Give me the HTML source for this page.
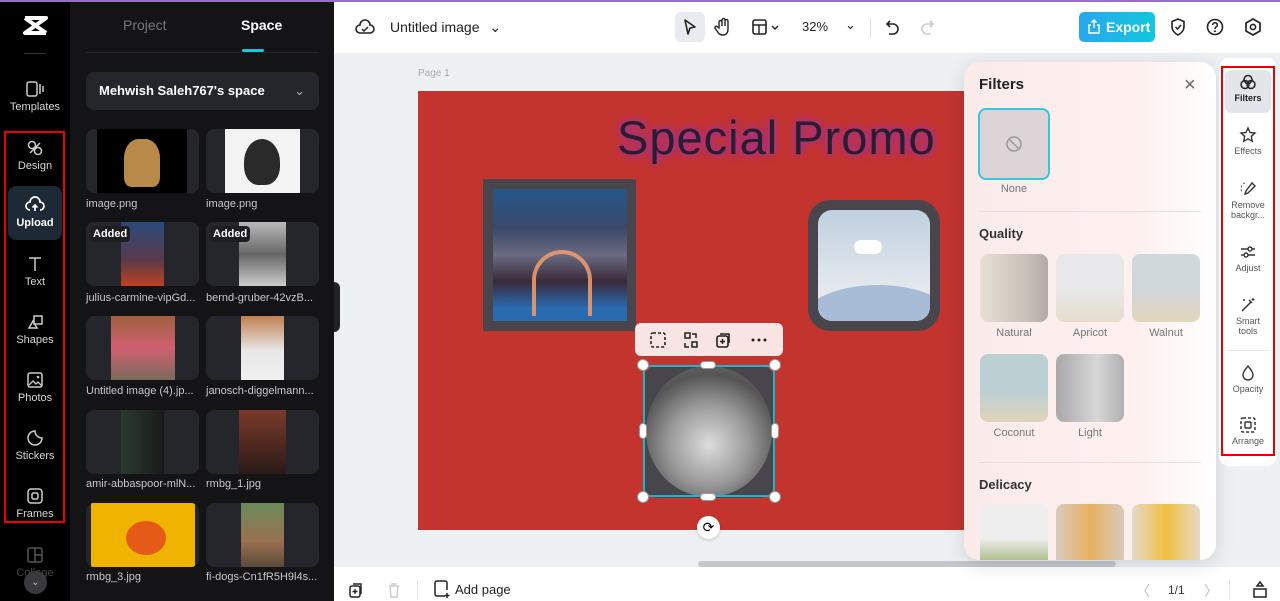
<!DOCTYPE html>
<html><head><meta charset="utf-8">
<style>
*{box-sizing:border-box;margin:0;padding:0}
body{width:1280px;height:601px;overflow:hidden;font-family:"Liberation Sans",sans-serif;background:#eef1f4;position:relative}
.abs{position:absolute}
.rail{left:0;top:0;width:70px;height:601px;background:#000}
.ri{position:absolute;left:0;width:70px;text-align:center;color:#d8d8d8;font-size:11px}
.ri svg{display:block;margin:0 auto 3px}
.panel{left:70px;top:0;width:264px;height:601px;background:#141416}
.tile{position:absolute;width:113px;height:64px;background:#25262b;border-radius:8px;overflow:hidden}
.tile i{position:absolute;top:0;bottom:0;display:block}
.lbl{position:absolute;color:#c8c8cc;font-size:11px;white-space:nowrap}
.added{position:absolute;left:4px;top:4px;background:#1e1e22;color:#fff;font-weight:bold;font-size:11px;padding:2px 3px;border-radius:4px}
.rr{position:absolute;left:1224px;width:48px;text-align:center;font-size:9px;color:#555;line-height:10px}
.rr svg{display:block;margin:0 auto 3px}
.ft{position:absolute;width:68px;height:68px;border-radius:8px;overflow:hidden}
.fl{position:absolute;width:68px;text-align:center;font-size:11px;color:#777}
</style></head><body>
<div class="abs" style="left:0;top:0;width:1280px;height:2px;background:#9b70c4;z-index:5"></div>
<div class="abs" style="left:334px;top:2px;width:946px;height:51px;background:#fff"></div>
<div class="abs" style="left:334px;top:567px;width:946px;height:34px;background:#fff"></div>
<div class="abs rail">
 <svg class="abs" style="left:23px;top:16px" width="25" height="20" viewBox="0 0 25 20"><path d="M2 2h21L2 17h21M2 2l21 15" stroke="#fff" stroke-width="4" fill="none" stroke-linejoin="round"/></svg>
 <div class="abs" style="left:24px;top:53px;width:22px;height:1px;background:#333"></div>
 <div class="ri" style="top:80px"><svg width="20" height="18"><rect x="2" y="2" width="10" height="14" rx="2" fill="none" stroke="#ccc" stroke-width="1.5"/><path d="M15 4v10M18 6v6" stroke="#ccc" stroke-width="1.5"/></svg>Templates</div>
 <div class="abs" style="left:4px;top:131px;width:61px;height:392px;border:2px solid #e00"></div>
 <div class="ri" style="top:139px"><svg width="18" height="18"><circle cx="6" cy="6" r="3.5" fill="none" stroke="#ccc" stroke-width="1.5"/><circle cx="12" cy="12" r="3.5" fill="none" stroke="#ccc" stroke-width="1.5"/><path d="M4 14l10-10" stroke="#ccc" stroke-width="1.5"/></svg>Design</div>
 <div class="abs" style="left:8px;top:186px;width:54px;height:54px;background:#1d2a36;border-radius:8px"></div>
 <div class="ri" style="top:196px;color:#fff;font-weight:bold"><svg width="20" height="18"><path d="M5 14a4 4 0 0 1 0-8 5 5 0 0 1 10 0 4 4 0 0 1 0 8M10 15V9M7.5 11.5L10 9l2.5 2.5" fill="none" stroke="#fff" stroke-width="1.7"/></svg>Upload</div>
 <div class="ri" style="top:255px"><svg width="18" height="18"><path d="M3 3h12M9 3v13" stroke="#ccc" stroke-width="1.5"/></svg>Text</div>
 <div class="ri" style="top:313px"><svg width="20" height="18"><path d="M9 3h8v8h-8zM4 15l4-7 4 7z" fill="none" stroke="#ccc" stroke-width="1.5"/></svg>Shapes</div>
 <div class="ri" style="top:371px"><svg width="18" height="18"><rect x="2" y="2" width="14" height="14" rx="2" fill="none" stroke="#ccc" stroke-width="1.5"/><path d="M3 14l4-4 3 3 2-2 4 4" fill="none" stroke="#ccc" stroke-width="1.3"/><circle cx="12" cy="6" r="1.3" fill="#ccc"/></svg>Photos</div>
 <div class="ri" style="top:429px"><svg width="18" height="18"><path d="M9 2a7 7 0 1 0 7 7 7 7 0 0 1-7-7z" fill="none" stroke="#ccc" stroke-width="1.5"/></svg>Stickers</div>
 <div class="ri" style="top:487px"><svg width="18" height="18"><rect x="2" y="2" width="14" height="14" rx="3" fill="none" stroke="#ccc" stroke-width="1.5"/><rect x="6" y="6" width="6" height="6" rx="1.5" fill="none" stroke="#ccc" stroke-width="1.5"/></svg>Frames</div>
 <div class="ri" style="top:546px;color:#444"><svg width="18" height="18"><rect x="2" y="2" width="14" height="14" rx="2" fill="none" stroke="#555" stroke-width="1.5"/><path d="M9 2v14M9 9h7" stroke="#555" stroke-width="1.5"/></svg>Collage</div>
 <div class="abs" style="left:24px;top:571px;width:23px;height:23px;border-radius:50%;background:#3a3a3e;color:#bbb;font-size:10px;text-align:center;line-height:23px">⌄</div>
</div>
<div class="abs panel">
 <div class="abs" style="left:53px;top:17px;color:#777;font-size:14px">Project</div>
 <div class="abs" style="left:171px;top:17px;color:#fff;font-size:14px;font-weight:bold">Space</div>
 <div class="abs" style="left:172px;top:49px;width:22px;height:3px;background:#1fc4d8;border-radius:2px"></div>
 <div class="abs" style="left:16px;top:52px;width:233px;height:1px;background:#26272b"></div>
 <div class="abs" style="left:16px;top:72px;width:233px;height:38px;background:#25262b;border-radius:8px;color:#fff;font-weight:bold;font-size:13px;line-height:38px;padding-left:13px">Mehwish Saleh767's space<span style="position:absolute;right:14px;color:#aaa;font-weight:normal">⌄</span></div>
</div>
<div class="tile" style="left:86px;top:129px"><i style="left:11px;width:90px;background:#000"></i><i style="left:38px;width:36px;top:10px;bottom:6px;background:#b88a4a;border-radius:40% 40% 20% 20%"></i></div>
<div class="tile" style="left:206px;top:129px"><i style="left:19px;width:75px;background:#f3f3f3"></i><i style="left:38px;width:36px;top:10px;bottom:8px;background:#2a2a2a;border-radius:50% 50% 40% 40%"></i></div>
<div class="lbl" style="left:86px;top:198px">image.png</div><div class="lbl" style="left:206px;top:198px">image.png</div>
<div class="tile" style="left:86px;top:222px"><i style="left:35px;width:43px;background:linear-gradient(#2a4a7a,#5a3a4a 60%,#c04020)"></i><span class="added">Added</span></div>
<div class="tile" style="left:206px;top:222px"><i style="left:33px;width:47px;background:linear-gradient(#bbb,#666 50%,#ccc)"></i><span class="added">Added</span></div>
<div class="lbl" style="left:86px;top:292px">julius-carmine-vipGd...</div><div class="lbl" style="left:206px;top:292px">bernd-gruber-42vzB...</div>
<div class="tile" style="left:86px;top:316px"><i style="left:25px;width:64px;background:linear-gradient(#a06040,#d06070 50%,#7a6a5a)"></i></div>
<div class="tile" style="left:206px;top:316px"><i style="left:35px;width:43px;background:linear-gradient(#c08050,#e8e8e8 55%,#f0f0f0)"></i></div>
<div class="lbl" style="left:86px;top:385px">Untitled image (4).jp...</div><div class="lbl" style="left:206px;top:385px">janosch-diggelmann...</div>
<div class="tile" style="left:86px;top:410px"><i style="left:35px;width:43px;background:linear-gradient(90deg,#2a3a30,#1a1a1a)"></i></div>
<div class="tile" style="left:206px;top:410px"><i style="left:33px;width:47px;background:linear-gradient(#7a3a2a,#2a1a18)"></i></div>
<div class="lbl" style="left:86px;top:478px">amir-abbaspoor-mlN...</div><div class="lbl" style="left:206px;top:478px">rmbg_1.jpg</div>
<div class="tile" style="left:86px;top:503px"><i style="left:5px;width:104px;background:#f0b400"></i><i style="left:40px;width:40px;top:18px;bottom:12px;background:#e65a18;border-radius:50%"></i></div>
<div class="tile" style="left:206px;top:503px"><i style="left:35px;width:43px;background:linear-gradient(#6a8a5a,#9a7050 60%,#5a4a3a)"></i></div>
<div class="lbl" style="left:86px;top:571px">rmbg_3.jpg</div><div class="lbl" style="left:206px;top:571px">fi-dogs-Cn1fR5H9l4s...</div>
<div class="abs" style="left:334px;top:282px;width:6px;height:50px;background:#222;border-radius:0 6px 6px 0"></div>
<svg class="abs" style="left:355px;top:18px" width="20" height="18"><path d="M5 15a4 4 0 0 1 0-8 5 5 0 0 1 10 0 4 4 0 0 1 0 8z" fill="none" stroke="#222" stroke-width="1.6"/><path d="M7 11l2 2 4-4" fill="none" stroke="#222" stroke-width="1.5"/></svg>
<div class="abs" style="left:390px;top:19px;font-size:14px;color:#222">Untitled image <span style="margin-left:6px">⌄</span></div>
<div class="abs" style="left:675px;top:12px;width:30px;height:30px;background:#e8ebef;border-radius:6px"></div>
<svg class="abs" style="left:682px;top:18px" width="16" height="18"><path d="M3 2l10 7-5 1-2 6z" fill="none" stroke="#222" stroke-width="1.6" stroke-linejoin="round"/></svg>
<svg class="abs" style="left:714px;top:17px" width="18" height="20"><path d="M5 11V5a1.5 1.5 0 0 1 3 0v4V3a1.5 1.5 0 0 1 3 0v6V4a1.5 1.5 0 0 1 3 0v8c0 4-2 6-5 6s-4-1-6-4l-2-3a1.3 1.3 0 0 1 2-1.5z" fill="none" stroke="#222" stroke-width="1.4"/></svg>
<svg class="abs" style="left:752px;top:19px" width="28" height="16"><rect x="1" y="1" width="13" height="14" rx="2" fill="none" stroke="#222" stroke-width="1.6"/><path d="M1 6h13M7 6v9M20 7l3 3 3-3" fill="none" stroke="#222" stroke-width="1.4"/></svg>
<div class="abs" style="left:802px;top:19px;font-size:13px;color:#222">32%</div>
<div class="abs" style="left:845px;top:17px;font-size:13px;color:#222">⌄</div>
<div class="abs" style="left:870px;top:18px;width:1px;height:20px;background:#ddd"></div>
<svg class="abs" style="left:884px;top:18px" width="18" height="18"><path d="M6 3L3 6l3 3M3 6h6a5 5 0 0 1 0 10H5" fill="none" stroke="#222" stroke-width="1.6"/></svg>
<svg class="abs" style="left:918px;top:18px" width="18" height="18"><path d="M12 3l3 3-3 3M15 6H9a5 5 0 0 0 0 10h4" fill="none" stroke="#ccc" stroke-width="1.6"/></svg>
<div class="abs" style="left:1079px;top:12px;width:76px;height:30px;border-radius:5px;background:linear-gradient(90deg,#2aa6ee,#10c8dc);color:#fff;font-weight:bold;font-size:14px;line-height:30px;padding-left:27px">Export</div>
<svg class="abs" style="left:1087px;top:19px" width="14" height="15"><path d="M4 6H2v8h10V6h-2M7 9V1M4.5 3.5L7 1l2.5 2.5" fill="none" stroke="#fff" stroke-width="1.4"/></svg>
<svg class="abs" style="left:1169px;top:17px" width="18" height="20"><path d="M9 2l6 2.5v5c0 4-3 7-6 8.5-3-1.5-6-4.5-6-8.5v-5z" fill="none" stroke="#222" stroke-width="1.6"/><path d="M6.5 10l2 2 3.5-4" fill="none" stroke="#222" stroke-width="1.5"/></svg>
<svg class="abs" style="left:1205px;top:17px" width="20" height="20"><circle cx="10" cy="10" r="7.5" fill="none" stroke="#222" stroke-width="1.6"/><path d="M7.7 8a2.3 2.3 0 1 1 3 2.2c-.7.3-.7.8-.7 1.8" fill="none" stroke="#222" stroke-width="1.5"/><circle cx="10" cy="14.3" r="1" fill="#222"/></svg>
<svg class="abs" style="left:1243px;top:17px" width="20" height="20"><path d="M10 2l7 4v8l-7 4-7-4V6z" fill="none" stroke="#222" stroke-width="1.7"/><circle cx="10" cy="10" r="2.6" fill="none" stroke="#222" stroke-width="1.6"/></svg>
<div class="abs" style="left:418px;top:68px;font-size:10px;color:#aaa">Page 1</div>
<div class="abs" style="left:418px;top:91px;width:560px;height:439px;background:#c3342f"></div>
<div class="abs" style="left:617px;top:110px;font-size:47px;line-height:56px;color:#2a1e2a;font-family:'Liberation Sans',sans-serif;text-shadow:0 0 6px #a030a0,0 0 10px #a030a0;letter-spacing:1px;white-space:nowrap">Special Promo</div>
<div class="abs" style="left:483px;top:179px;width:153px;height:152px;background:#48464c"></div>
<div class="abs" style="left:493px;top:189px;width:134px;height:132px;background:linear-gradient(#27558a,#3a4a6a 30%,#6a6a80 50%,#3a2a3a 70%,#2a6ab0 90%)"></div>
<div class="abs" style="left:532px;top:250px;width:60px;height:66px;border:4px solid #f0a070;border-bottom:none;border-radius:30px 30px 0 0;opacity:.85"></div>
<div class="abs" style="left:808px;top:200px;width:132px;height:131px;background:#48464c;border-radius:22px"></div>
<div class="abs" style="left:818px;top:210px;width:112px;height:111px;border-radius:14px;background:linear-gradient(#c0d0e0,#e4e8ee 70%);overflow:hidden"><div style="position:absolute;left:-20px;top:75px;width:160px;height:80px;background:#a8bcd8;border-radius:50% 50% 0 0"></div><div style="position:absolute;left:36px;top:30px;width:28px;height:14px;background:#fff;border-radius:8px"></div></div>
<div class="abs" style="left:635px;top:323px;width:148px;height:33px;background:#f7e4e3;border-radius:6px"></div>
<svg class="abs" style="left:649px;top:331px" width="130" height="18"><rect x="2" y="2" width="14" height="14" rx="2" fill="none" stroke="#222" stroke-width="1.6" stroke-dasharray="3 2"/><rect x="36" y="2" width="5" height="5" fill="none" stroke="#222" stroke-width="1.5"/><rect x="43" y="11" width="5" height="5" fill="none" stroke="#222" stroke-width="1.5"/><path d="M43 3h4v4M40 16h-4v-4" fill="none" stroke="#222" stroke-width="1.5"/><rect x="68" y="5" width="11" height="11" rx="2" fill="none" stroke="#222" stroke-width="1.6"/><path d="M71 3h9v9M73.5 8v5M71 10.5h5" fill="none" stroke="#222" stroke-width="1.5"/><circle cx="104" cy="9" r="1.5" fill="#222"/><circle cx="110" cy="9" r="1.5" fill="#222"/><circle cx="116" cy="9" r="1.5" fill="#222"/></svg>
<div class="abs" style="left:643px;top:365px;width:132px;height:133px;background:#48464c;border-radius:16px"></div>
<div class="abs" style="left:646px;top:366px;width:126px;height:131px;border-radius:50%;background:radial-gradient(circle at 50% 60%,#ddd 0,#999 40%,#555 70%,#777)"></div>
<div class="abs" style="left:643px;top:365px;width:132px;height:132px;border:2px solid #1ab6c9"></div>
<div class="abs" style="left:637px;top:359px;width:12px;height:12px;border-radius:50%;background:#fff;border:1px solid #999"></div>
<div class="abs" style="left:769px;top:359px;width:12px;height:12px;border-radius:50%;background:#fff;border:1px solid #999"></div>
<div class="abs" style="left:637px;top:491px;width:12px;height:12px;border-radius:50%;background:#fff;border:1px solid #999"></div>
<div class="abs" style="left:769px;top:491px;width:12px;height:12px;border-radius:50%;background:#fff;border:1px solid #999"></div>
<div class="abs" style="left:700px;top:361px;width:16px;height:8px;border-radius:4px;background:#fff;border:1px solid #999"></div>
<div class="abs" style="left:700px;top:493px;width:16px;height:8px;border-radius:4px;background:#fff;border:1px solid #999"></div>
<div class="abs" style="left:639px;top:423px;width:8px;height:16px;border-radius:4px;background:#fff;border:1px solid #999"></div>
<div class="abs" style="left:771px;top:423px;width:8px;height:16px;border-radius:4px;background:#fff;border:1px solid #999"></div>
<div class="abs" style="left:697px;top:516px;width:23px;height:23px;border-radius:50%;background:#fff;box-shadow:0 1px 3px #0003;text-align:center;line-height:23px;font-size:14px">⟳</div>
<div class="abs" style="left:698px;top:561px;width:418px;height:6px;border-radius:3px;background:#c3c8cd"></div>
<div class="abs" style="left:964px;top:62px;width:252px;height:498px;border-radius:16px;background:linear-gradient(90deg,#fbeceb,#fdf0ef 70%,#fff);box-shadow:0 4px 20px #0002;overflow:hidden">
 <div class="abs" style="left:15px;top:14px;font-size:15px;font-weight:bold;color:#222">Filters</div>
 <div class="abs" style="left:220px;top:12px;font-size:20px;color:#666">×</div>
 <div class="abs" style="left:14px;top:46px;width:72px;height:72px;border:2px solid #36c8de;border-radius:8px;background:#dcd4d6"></div>
 <svg class="abs" style="left:41px;top:73px" width="18" height="18"><circle cx="9" cy="9" r="7" fill="none" stroke="#999" stroke-width="1.5"/><path d="M4 4l10 10" stroke="#999" stroke-width="1.5"/></svg>
 <div class="fl" style="left:16px;top:121px">None</div>
 <div class="abs" style="left:15px;top:149px;width:222px;height:1px;background:#e8dede"></div>
 <div class="abs" style="left:15px;top:164px;font-size:13px;font-weight:bold;color:#333">Quality</div>
 <div class="ft" style="left:16px;top:192px;background:linear-gradient(90deg,#e8e0d4,#c8c0b8 70%,#b0aaa6)"></div>
 <div class="ft" style="left:92px;top:192px;background:linear-gradient(#e8e8ea 50%,#e6dccb)"></div>
 <div class="ft" style="left:168px;top:192px;background:linear-gradient(#d0d8dc 50%,#e2d6bc)"></div>
 <div class="fl" style="left:16px;top:265px">Natural</div><div class="fl" style="left:92px;top:265px">Apricot</div><div class="fl" style="left:168px;top:265px">Walnut</div>
 <div class="ft" style="left:16px;top:292px;background:linear-gradient(#bcd0d4 55%,#e0d4b8)"></div>
 <div class="ft" style="left:92px;top:292px;background:linear-gradient(90deg,#a8a8aa,#d8d8d8 60%,#b0b0b2)"></div>
 <div class="fl" style="left:16px;top:365px">Coconut</div><div class="fl" style="left:92px;top:365px">Light</div>
 <div class="abs" style="left:15px;top:400px;width:222px;height:1px;background:#e8dede"></div>
 <div class="abs" style="left:15px;top:415px;font-size:13px;font-weight:bold;color:#333">Delicacy</div>
 <div class="ft" style="left:16px;top:442px;background:linear-gradient(#eee 50%,#8fa860)"></div>
 <div class="ft" style="left:92px;top:442px;background:linear-gradient(90deg,#d8cbbf,#e8b060 50%,#d8cbbf)"></div>
 <div class="ft" style="left:168px;top:442px;background:linear-gradient(90deg,#e4d8c8,#f0c040 50%,#e4d8c8)"></div>
</div>
<div class="abs" style="left:1219px;top:58px;width:58px;height:408px;background:#fff;border-radius:10px"></div>
<div class="abs" style="left:1225px;top:70px;width:46px;height:43px;background:#e2e5e9;border-radius:6px"></div>
<div class="abs" style="left:1221px;top:66px;width:54px;height:390px;border:2px solid #e00"></div>
<div class="rr" style="top:74px;font-weight:bold;color:#222"><svg width="18" height="16"><circle cx="9" cy="5.5" r="4" fill="none" stroke="#222" stroke-width="1.5"/><circle cx="6" cy="10.5" r="4" fill="none" stroke="#222" stroke-width="1.5"/><circle cx="12" cy="10.5" r="4" fill="none" stroke="#222" stroke-width="1.5"/></svg>Filters</div>
<div class="rr" style="top:126px"><svg width="18" height="17"><path d="M9 2l2 4.5 5 .5-3.7 3.3 1 5L9 12.8 4.7 15.3l1-5L2 7l5-.5z" fill="none" stroke="#333" stroke-width="1.4"/></svg>Effects</div>
<div class="rr" style="top:180px"><svg width="18" height="17"><path d="M6 3a6 6 0 0 0-3 9" fill="none" stroke="#555" stroke-dasharray="2 2"/><path d="M13 3l3 3-7 7-3 1 1-3z" fill="none" stroke="#333" stroke-width="1.4"/></svg>Remove<br>backgr...</div>
<div class="rr" style="top:243px"><svg width="18" height="17"><path d="M2 6h14M2 12h14" stroke="#333" stroke-width="1.4"/><circle cx="11" cy="6" r="2" fill="#fff" stroke="#333" stroke-width="1.4"/><circle cx="7" cy="12" r="2" fill="#fff" stroke="#333" stroke-width="1.4"/></svg>Adjust</div>
<div class="rr" style="top:296px"><svg width="18" height="17"><path d="M3 15l9-9M10 4l3 3" stroke="#333" stroke-width="1.5"/><path d="M14 2v3M12.5 3.5h3M5 3v2M4 4h2" stroke="#333"/></svg>Smart<br>tools</div>
<div class="abs" style="left:1227px;top:350px;width:42px;height:1px;background:#e5e5e5"></div>
<div class="rr" style="top:364px"><svg width="18" height="17"><path d="M9 2c3 4 5 6 5 9a5 5 0 0 1-10 0c0-3 2-5 5-9z" fill="none" stroke="#333" stroke-width="1.4"/></svg>Opacity</div>
<div class="rr" style="top:416px"><svg width="18" height="17"><rect x="2" y="2" width="14" height="14" rx="2" fill="none" stroke="#333" stroke-width="1.5" stroke-dasharray="3 2"/><rect x="6" y="6" width="6" height="6" rx="1" fill="none" stroke="#333" stroke-width="1.4"/></svg>Arrange</div>
<svg class="abs" style="left:348px;top:581px" width="16" height="18"><rect x="2" y="5" width="10" height="11" rx="2" fill="none" stroke="#222" stroke-width="1.5"/><path d="M5 3h8v10M7 8v5M4.5 10.5h5" fill="none" stroke="#222" stroke-width="1.4"/></svg>
<svg class="abs" style="left:386px;top:581px" width="16" height="18"><path d="M3 5h10M6 5V3h4v2M4 5l1 11h6l1-11" fill="none" stroke="#ccc" stroke-width="1.4"/></svg>
<div class="abs" style="left:417px;top:580px;width:1px;height:20px;background:#e5e5e5"></div>
<svg class="abs" style="left:433px;top:580px" width="18" height="19"><path d="M12 16H4a2 2 0 0 1-2-2V3a2 2 0 0 1 2-2h8a2 2 0 0 1 2 2v7M14 13v5M11.5 15.5h5" fill="none" stroke="#222" stroke-width="1.5"/></svg>
<div class="abs" style="left:455px;top:582px;font-size:13px;color:#222">Add page</div>
<div class="abs" style="left:1136px;top:581px;font-size:14px;color:#bbb">〈</div>
<div class="abs" style="left:1168px;top:583px;font-size:12px;color:#333">1/1</div>
<div class="abs" style="left:1204px;top:581px;font-size:14px;color:#bbb">〉</div>
<div class="abs" style="left:1229px;top:580px;width:1px;height:20px;background:#e5e5e5"></div>
<svg class="abs" style="left:1252px;top:580px" width="16" height="19"><path d="M8 2L5 6h6zM2 9h12v8H2z" fill="none" stroke="#222" stroke-width="1.5"/></svg>
</body></html>
